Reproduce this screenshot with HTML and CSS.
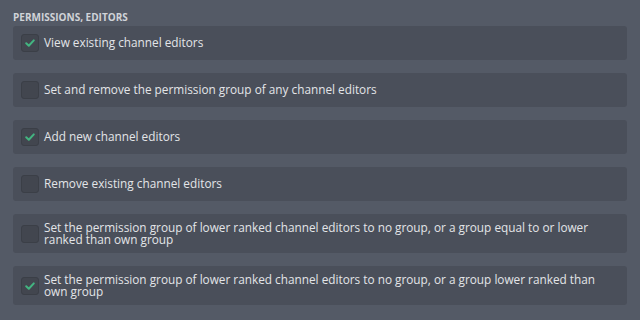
FILE: index.html
```html
<!DOCTYPE html>
<html lang="en">
<head>
  <meta charset="UTF-8" />
  <title>Permissions - Editors</title>
  <link rel="stylesheet" href="styles.css">
</head>
<body>
  <section class="perm-section">
    <h2 class="perm-title">Permissions, Editors</h2>
    <ul class="perm-list">
      <li class="perm-item">
        <span class="check is-checked"><svg viewBox="0 0 12 12"><path d="M2.2 6.3 L4.8 8.8 L9.8 3.4" /></svg></span>
        <span class="perm-text">View existing channel editors</span>
      </li>
      <li class="perm-item">
        <span class="check"></span>
        <span class="perm-text">Set and remove the permission group of any channel editors</span>
      </li>
      <li class="perm-item">
        <span class="check is-checked"><svg viewBox="0 0 12 12"><path d="M2.2 6.3 L4.8 8.8 L9.8 3.4" /></svg></span>
        <span class="perm-text">Add new channel editors</span>
      </li>
      <li class="perm-item">
        <span class="check"></span>
        <span class="perm-text">Remove existing channel editors</span>
      </li>
      <li class="perm-item">
        <span class="check"></span>
        <span class="perm-text">Set the permission group of lower ranked channel editors to no group, or a group equal to or lower ranked than own group</span>
      </li>
      <li class="perm-item">
        <span class="check is-checked"><svg viewBox="0 0 12 12"><path d="M2.2 6.3 L4.8 8.8 L9.8 3.4" /></svg></span>
        <span class="perm-text">Set the permission group of lower ranked channel editors to no group, or a group lower ranked than own group</span>
      </li>
    </ul>
  </section>
</body>
</html>
```

FILE: styles.css
```css
:root {
  --font-sans: 'Open Sans', 'Noto Sans', sans-serif;
  --color-bg: #545a66;
  --color-card: #4a4f5a;
  --color-box: #42464f;
  --color-box-border: #3b3f47;
  --color-text: #e3e5e8;
  --color-title: #d0d3d8;
  --color-green: #43b581;
}

* {
  box-sizing: border-box;
}

body {
  margin: 0;
  font-family: var(--font-sans);
  background-color: var(--color-bg);
  color: var(--color-text);
  padding: 11px 13px;
}

.perm-title {
  margin: 0 0 3px;
  font-size: 10px;
  font-weight: 700;
  text-transform: uppercase;
  color: var(--color-title);
  line-height: 12px;
}

.perm-list {
  list-style: none;
  margin: 0;
  padding: 0;
  display: flex;
  flex-direction: column;
  gap: 13px;
}

.perm-item {
  display: flex;
  align-items: center;
  gap: 5px;
  padding: 8px 14px 8px 8px;
  background: var(--color-card);
  border-radius: 3px;
}

.check {
  flex: none;
  width: 18px;
  height: 18px;
  border-radius: 3px;
  background: var(--color-box);
  border: 1px solid var(--color-box-border);
  display: flex;
  align-items: center;
  justify-content: center;
}

.check svg {
  width: 12px;
  height: 12px;
  fill: none;
  stroke: var(--color-green);
  stroke-width: 2;
  stroke-linecap: round;
  stroke-linejoin: round;
}

.perm-text {
  font-size: 11.8px;
  line-height: 11.5px;
}
```
